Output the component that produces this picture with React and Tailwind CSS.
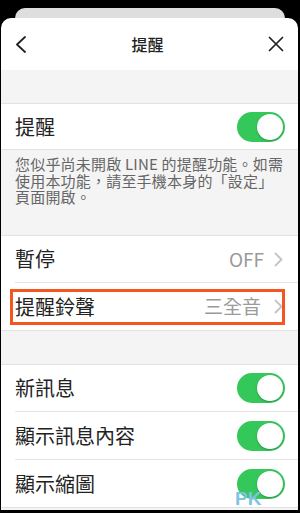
import React from "react";

const font = { fontFamily: '"Noto Sans CJK TC", "Noto Sans", sans-serif' };

function Toggle() {
  return (
    <div className="w-[48px] h-[30px] rounded-full bg-[#34c759] flex items-center justify-end pr-[2px] shrink-0">
      <div className="w-[26px] h-[26px] rounded-full bg-white shadow-[0_1px_2px_rgba(0,0,0,0.25)]" />
    </div>
  );
}

function Chevron() {
  return (
    <svg width="9" height="15" viewBox="0 0 9 15" className="shrink-0">
      <path d="M1.5 1.5 L7.5 7.5 L1.5 13.5" fill="none" stroke="#c4c4c8" strokeWidth="1.8" strokeLinecap="round" strokeLinejoin="round" />
    </svg>
  );
}

function ToggleRow({ label, h, divider }) {
  return (
    <div className={`flex items-center pl-[14px] ${h}`}>
      <div className={`flex-1 flex items-center h-full pr-[13px] ${divider ? "border-b border-[#e4e4e4]" : ""}`}>
        <span className="flex-1 text-[20px] text-[#222]">{label}</span>
        <Toggle />
      </div>
    </div>
  );
}

export default function App() {
  return (
    <div className="w-[300px] h-[513px] bg-black overflow-hidden flex flex-col pt-[8px]" style={font}>
      <div className="mx-[15px] h-[10px] rounded-t-[10px] bg-[#dedede] shrink-0" />
      <div className="ml-[1px] mr-[2px] flex-1 rounded-t-[10px] bg-white flex flex-col overflow-hidden">
        {/* Header */}
        <div className="h-[52px] flex items-center px-[14px] shrink-0">
          <svg width="12" height="17" viewBox="0 0 12 17">
            <path d="M10 1 L2 8.5 L10 16" fill="none" stroke="#222" strokeWidth="1.8" strokeLinecap="round" strokeLinejoin="round" />
          </svg>
          <div className="flex-1 text-center text-[16px] font-medium text-[#222]">提醒</div>
          <svg width="16" height="16" viewBox="0 0 16 16">
            <path d="M1.5 1.5 L14.5 14.5 M14.5 1.5 L1.5 14.5" fill="none" stroke="#222" strokeWidth="1.7" strokeLinecap="round" />
          </svg>
        </div>
        <div className="flex-1 bg-[#f4f4f4] flex flex-col">
          <div className="h-[33px]" />
          {/* 提醒 */}
          <div className="h-[47px] bg-white border-y border-[#e2e2e2] flex items-center pl-[14px] pr-[13px]">
            <span className="flex-1 text-[20px] text-[#222]">提醒</span>
            <Toggle />
          </div>
          {/* Description */}
          <div className="h-[85px] pl-[14px] pr-[4px] pt-[6px] text-[15px] leading-[16.7px] tracking-[0.2px] text-[#666] whitespace-nowrap">
            您似乎尚未開啟 LINE 的提醒功能。如需
            <br />
            使用本功能，請至手機本身的「設定」
            <br />
            頁面開啟。
          </div>
          {/* 暫停 / 提醒鈴聲 */}
          <div className="bg-white border-y border-[#e2e2e2]">
            <div className="h-[47px] flex items-center pl-[14px]">
              <div className="flex-1 h-full flex items-center pr-[15px] border-b border-[#e4e4e4]">
                <span className="flex-1 text-[20px] text-[#222]">暫停</span>
                <span className="text-[19px] text-[#9a9a9a] mr-[10px]">OFF</span>
                <Chevron />
              </div>
            </div>
            <div className="h-[47px] relative flex items-center pl-[14px] pr-[15px]">
              <span className="flex-1 text-[20px] text-[#222]">提醒鈴聲</span>
              <span className="text-[19px] text-[#9a9a9a] mr-[13px]">三全音</span>
              <Chevron />
              <div className="absolute left-[9px] top-[6px] w-[275px] h-[36px] border-[3px] border-[#f5561f]" />
            </div>
          </div>
          <div className="h-[33px]" />
          {/* toggles */}
          <div className="bg-white border-y border-[#e2e2e2] relative">
            <ToggleRow label="新訊息" h="h-[47px]" divider />
            <ToggleRow label="顯示訊息內容" h="h-[48px]" divider />
            <ToggleRow label="顯示縮圖" h="h-[47px]" />
            <div className="absolute left-[234px] bottom-[-1px] text-[19px] font-bold leading-none text-[#7cc4e2]" style={{ fontFamily: '"Liberation Sans", sans-serif' }}>
              PK
            </div>
          </div>
        </div>
      </div>
      <div className="h-[3px] shrink-0" />
    </div>
  );
}
